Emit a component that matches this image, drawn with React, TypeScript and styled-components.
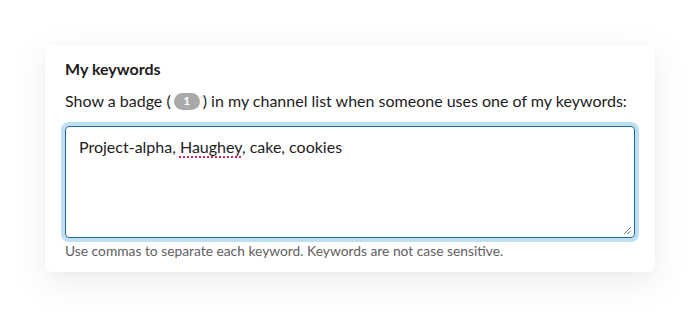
import styled, { createGlobalStyle } from 'styled-components';

const GlobalStyle = createGlobalStyle`
  html, body {
    margin: 0;
    padding: 0;
    background: #ffffff;
    font-family: Lato, "Noto Sans", sans-serif;
    color: #1d1c1d;
  }
`;

const Page = styled.div`
  width: 700px;
  height: 317px;
  padding: 45px 45px 0 45px;
  box-sizing: border-box;
`;

const Card = styled.div`
  background: #fff;
  border-radius: 6px;
  box-shadow: 0 10px 34px rgba(0, 0, 0, 0.08), 0 1px 4px rgba(0, 0, 0, 0.03);
  padding: 13px 20px 12px 20px;
`;

const Title = styled.h3`
  margin: 0;
  font-size: 16px;
  font-weight: 700;
  line-height: 22px;
`;

const Description = styled.p`
  margin: 9px 0 13px 0;
  font-size: 16px;
  line-height: 24px;
  display: flex;
  align-items: center;
`;

const Badge = styled.span`
  display: inline-flex;
  align-items: center;
  justify-content: center;
  width: 26px;
  height: 17px;
  margin: 0 3px 0 3px;
  border-radius: 9px;
  background: #a9a9a9;
  color: #fff;
  font-size: 12px;
  font-weight: 700;
`;

const Field = styled.div`
  position: relative;
  height: 112px;
  box-sizing: border-box;
  border: 1px solid #1f6aa5;
  border-radius: 4px;
  box-shadow: 0 0 0 4px #bfe0f3;
  padding: 9px 13px;
  font-size: 16px;
  line-height: 22px;
`;

const Misspelled = styled.span`
  text-decoration: underline dotted #d5245b;
  text-underline-offset: 3px;
  text-decoration-thickness: 1.5px;
`;

const Grip = styled.svg`
  position: absolute;
  right: 2px;
  bottom: 2px;
`;

const Hint = styled.div`
  margin-top: 4px;
  font-size: 13.8px;
  line-height: 18px;
  color: #616061;
`;

function App() {
  return (
    <>
      <GlobalStyle />
      <Page>
        <Card>
          <Title>My keywords</Title>
          <Description>
            Show a badge (<Badge>1</Badge>) in my channel list when someone uses one of my keywords:
          </Description>
          <Field>
            Project-alpha, <Misspelled>Haughey</Misspelled>, cake, cookies
            <Grip width="9" height="9" viewBox="0 0 9 9">
              <path d="M1 8 L8 1 M4.5 8 L8 4.5" stroke="#777" strokeWidth="1" />
            </Grip>
          </Field>
          <Hint>Use commas to separate each keyword. Keywords are not case sensitive.</Hint>
        </Card>
      </Page>
    </>
  );
}

export default App;
